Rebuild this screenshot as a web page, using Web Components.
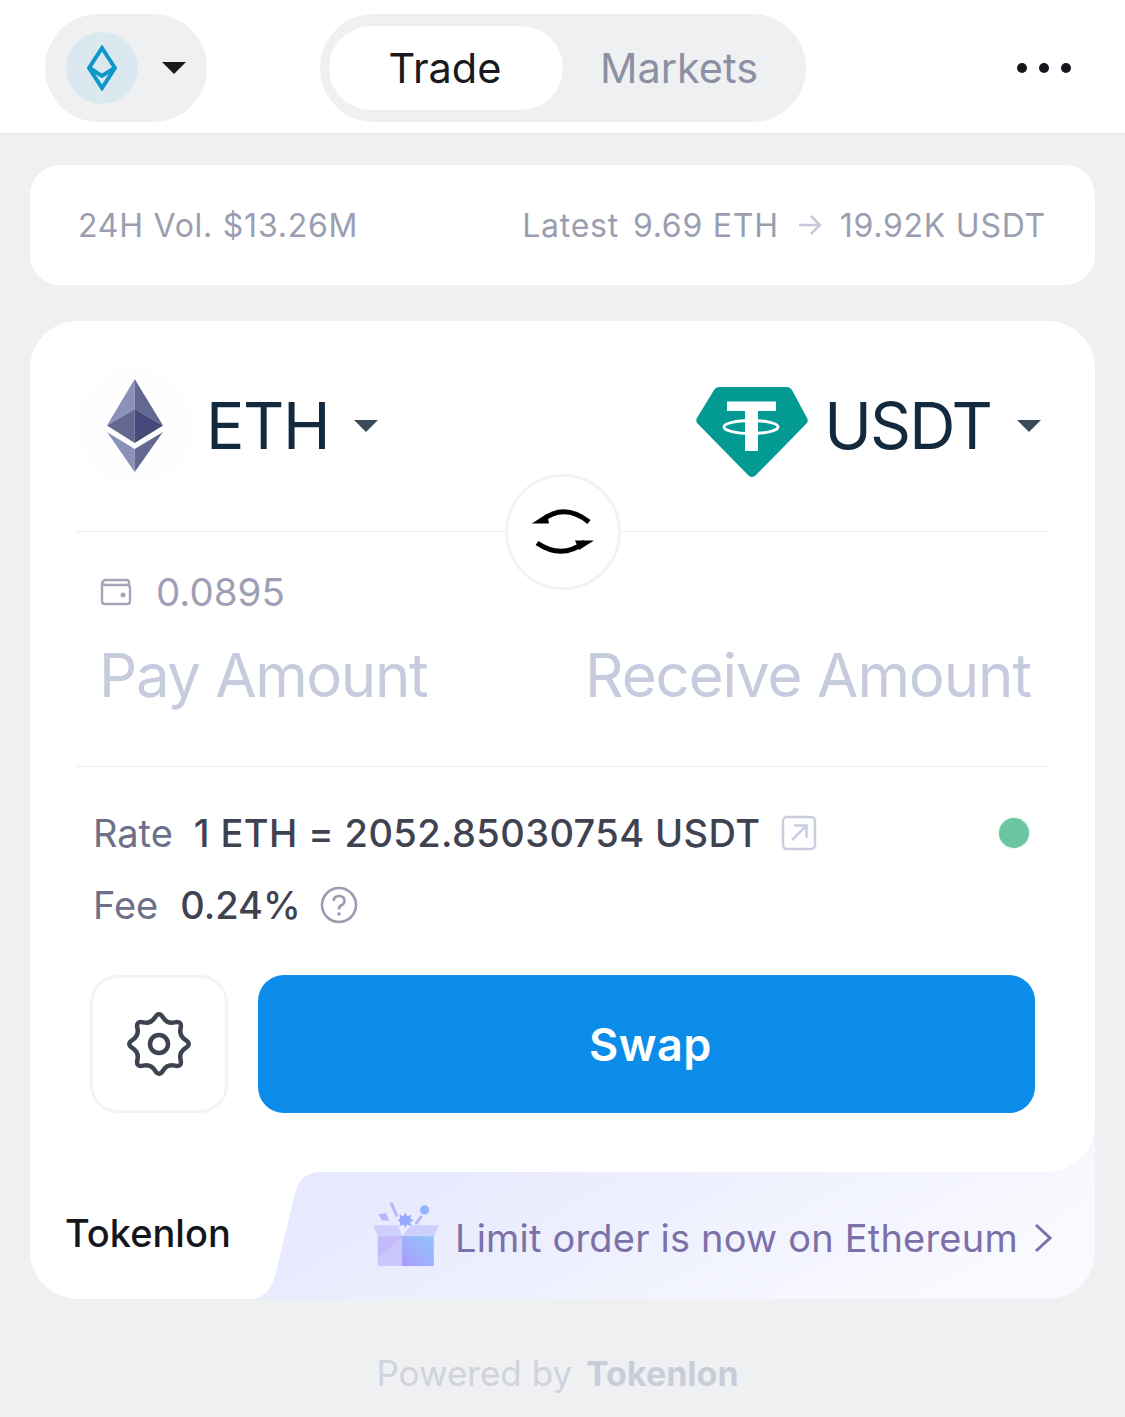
<!DOCTYPE html>
<html>
<head>
<meta charset="utf-8">
<style>
html,body{margin:0;padding:0;background:#eff0f2;font-family:Inter,"Liberation Sans",sans-serif}
</style>
</head>
<body>
<tl-app></tl-app>
<script>
class TlHeader extends HTMLElement{
    constructor(){
        super();
        this.attachShadow({mode:'open'})
        this.shadowRoot.innerHTML=`
            <style>
                :host{display:flex;align-items:center;height:130px;background:#fff;border-bottom:2px solid #eceef1;padding:3px 0 0 45px}
                #network{display:flex;align-items:center;box-sizing:border-box;width:162px;height:108px;border-radius:54px;background:#eff0f2;padding-left:21px}
                #coin{display:flex;align-items:center;justify-content:center;width:72px;height:72px;border-radius:50%;background:#dbe8ef}
                #caret{margin-left:24px}
                #tabs{display:flex;align-items:center;box-sizing:border-box;width:486px;height:108px;margin-left:113px;padding-left:9px;border-radius:54px;background:#eff0f2}
                .tab{display:flex;align-items:center;justify-content:center;box-sizing:border-box;width:234px;height:84px;padding-right:2px;border-radius:42px;font-size:41.5px;color:#8d90a5}
                .on{background:#fff;color:#181a1f}
                #dots{display:flex;gap:12px;margin-left:211px}
                #dots i{width:10px;height:10px;border-radius:50%;background:#16181d}
            </style>
            <div id="network">
                <div id="coin">
                    <svg width="30" height="46" viewBox="0 0 30 46"><path d="M15 3 L28 23 L15 43 L2 23 Z M2.500 23 L15 31 L27.500 23" fill="none" stroke="#0e97c9" stroke-width="4" stroke-linejoin="miter"/></svg>
                </div>
                <svg id="caret" width="24" height="12" viewBox="0 0 24 12"><path d="M0 0 H24 L12 12 Z" fill="#181a1c"/></svg>
            </div>
            <div id="tabs">
                <div class="tab on">Trade</div>
                <div class="tab">Markets</div>
            </div>
            <div id="dots"><i></i><i></i><i></i></div>
        `
    }
}
customElements.define('tl-header',TlHeader)

class TlStats extends HTMLElement{
    constructor(){
        super();
        this.attachShadow({mode:'open'})
        this.shadowRoot.innerHTML=`
            <style>
                :host{display:flex;align-items:center;justify-content:space-between;box-sizing:border-box;height:120px;margin:30px 30px 0;padding:0 49px 0 48px;border-radius:30px;background:#fff;font-size:32px;letter-spacing:.75px;color:#9b9eb1}
                #latest{display:flex;align-items:center}
                #num{margin-left:14px}
                svg{margin:0 18px 0 19px}
            </style>
            <div>24H Vol. $13.26M</div>
            <div id="latest">
                <span>Latest</span><span id="num">9.69 ETH</span>
                <svg width="24" height="22" viewBox="0 0 24 22"><path d="M1 11 H22 M13 2 L22 11 L13 20" fill="none" stroke="#c5c9da" stroke-width="2.500"/></svg>
                <span>19.92K USDT</span>
            </div>
        `
    }
}
customElements.define('tl-stats',TlStats)

class TlToken extends HTMLElement{
    constructor(){
        super();
        this.attachShadow({mode:'open'})
        this.shadowRoot.innerHTML=`
            <style>
                :host{display:flex;align-items:center;font-size:64px;line-height:1;letter-spacing:-1.4px;color:#132a3e}
                svg{display:block;margin-left:var(--caret-gap,25px)}
            </style>
            <slot></slot>
            <span><slot name="label"></slot></span>
            <svg width="24" height="12" viewBox="0 0 24 12"><path d="M0 0 H24 L12 12 Z" fill="#3a4a58"/></svg>
        `
    }
}
customElements.define('tl-token',TlToken)

class TlInfo extends HTMLElement{
    constructor(){
        super();
        this.attachShadow({mode:'open'})
        this.shadowRoot.innerHTML=`
            <style>
                :host{display:flex;align-items:center;height:72px;padding-left:18px;font-size:38px;font-weight:500;color:#3f4250}
                #k{color:#6d7088;font-weight:400;margin-right:var(--key-gap,21px)}
            </style>
            <span id="k"><slot name="key"></slot></span>
            <slot></slot>
        `
    }
}
customElements.define('tl-info',TlInfo)

class TlCard extends HTMLElement{
    constructor(){
        super();
        this.attachShadow({mode:'open'})
        this.shadowRoot.innerHTML=`
            <style>
                :host{display:block;margin:36px 30px 0;border-radius:48px;overflow:hidden;background:#fff}
                #main{position:relative;z-index:1;box-sizing:border-box;height:851px;padding:0 45px;background:#fff;border-bottom-right-radius:48px}
                #tokens{display:flex;align-items:center;justify-content:space-between;box-sizing:border-box;height:211px;padding:0 9px 0 0;border-bottom:1px solid #ecedf5}
                #eth-wrap{display:flex;align-items:center;justify-content:center;width:119px;height:120px;margin-right:12px;border-radius:50%;background:#fefefe}
                #usdt-icon{margin:11px 15px 0 0}
                #usdt{--caret-gap:26px;letter-spacing:-1.9px}
                #flip{position:absolute;left:475px;top:153px;box-sizing:border-box;display:flex;align-items:center;justify-content:center;width:116px;height:116px;border-radius:50%;background:#fff;border:3px solid #f1f2f4}
                #bal{display:flex;align-items:center;height:120px;padding-left:25px;font-size:38.5px;color:#9da0b4;gap:24px}
                #amounts{display:flex;justify-content:space-between;box-sizing:border-box;height:115px;padding:0 19px 0 24px;font-size:60px;line-height:46px;letter-spacing:-1.1px;color:#c7cbde;border-bottom:1px solid #ecedf5}
                #pay{letter-spacing:-1.4px}
                #infos{padding-top:30px}
                #rate{letter-spacing:.4px}
                #fee{--key-gap:22px}
                #ext{margin-left:21px}
                #help{margin-left:19px}
                #dot{width:30px;height:30px;margin-left:auto;margin-right:21px;border-radius:50%;background:#6cc5a1;box-shadow:0 0 3px #bdecd6}
                #actions{display:flex;gap:30px;padding:34px 15px 0;}
                #gear{display:flex;align-items:center;justify-content:center;box-sizing:border-box;width:138px;height:138px;border-radius:28px;border:3px solid #f2f3f5;background:#fff}
                #swap{display:flex;align-items:center;justify-content:center;box-sizing:border-box;width:777px;height:138px;border-radius:26px;background:#0a8ce8;color:#fff;font-size:45px;font-weight:600;letter-spacing:.5px;padding-left:8px}
                #foot{position:relative;display:flex;align-items:center;height:175px;margin-top:-48px;padding-top:48px;box-sizing:border-box}
                #shape{position:absolute;left:0;bottom:0}
                #brand{position:relative;margin-left:35px;width:308px;font-size:38px;font-weight:500;color:#14161b;margin-top:-6px}
                #promo{position:relative;display:flex;align-items:center;font-size:38px;letter-spacing:.2px;color:#7c70a8;margin-top:4px}
                #gift{margin:-8px 16px 0 0}
                #chev{margin-left:16px}
            </style>
            <div id="main">
                <div id="tokens">
                    <tl-token>
                        <div id="eth-wrap">
                            <svg width="58" height="94" viewBox="0 0 58 94">
                                <path d="M28.700 0 L1 46.500 L28.700 30 Z" fill="#8a92b8"/>
                                <path d="M28.700 0 L57 46.500 L28.700 30 Z" fill="#62688f"/>
                                <path d="M1 46.500 L28.700 30 V64 Z" fill="#62688f"/>
                                <path d="M57 46.500 L28.700 30 V64 Z" fill="#444a79"/>
                                <path d="M1 53 L28.700 70 V93 Z" fill="#8a92b8"/>
                                <path d="M57 53 L28.700 70 V93 Z" fill="#62688f"/>
                            </svg>
                        </div>
                        <span slot="label">ETH</span>
                    </tl-token>
                    <tl-token id="usdt">
                        <svg id="usdt-icon" width="114" height="92" viewBox="0 0 114 92">
                            <path d="M24 1 H92 Q95 1 97 4 L112 32 Q114 35 111 38 L61 89 Q57 93 53 89 L3 38 Q0 35 2 32 L19 4 Q21 1 24 1 Z" fill="#029a93"/>
                            <path d="M32 15.500 H81 V25 H63 V65 H50 V25 H32 Z" fill="#fff"/>
                            <ellipse cx="56" cy="41" rx="27" ry="6.500" fill="none" stroke="#fff" stroke-width="3"/>
                        </svg>
                        <span slot="label">USDT</span>
                    </tl-token>
                </div>
                <div id="flip">
                    <svg width="64" height="48" viewBox="0 0 64 48">
                        <path d="M58 14 Q33 -6 10 13" fill="none" stroke="#000" stroke-width="5"/>
                        <path d="M0.700 15.500 L18 15.500 L16 6 Z" fill="#000"/>
                        <path d="M6 35 Q31 52 54 34" fill="none" stroke="#000" stroke-width="5"/>
                        <path d="M63 32.500 L44 32.500 L48 42 Z" fill="#000"/>
                    </svg>
                </div>
                <div id="bal">
                    <svg width="32" height="28" viewBox="0 0 32 28"><path d="M29 7 V4 Q29 2 27 2 H6 Q2 2 2 6 V23 Q2 26 5 26 H27 Q30 26 30 23 V10 Q30 7 27 7 H6 Q3 7 2.500 5" fill="none" stroke="#a3a6b9" stroke-width="2.400"/><circle cx="23" cy="17" r="2.500" fill="#a3a6b9"/></svg>
                    <span>0.0895</span>
                </div>
                <div id="amounts">
                    <span id="pay">Pay Amount</span>
                    <span>Receive Amount</span>
                </div>
                <div id="infos">
                    <tl-info>
                        <span slot="key">Rate</span>
                        <span id="rate">1 ETH = 2052.85030754 USDT</span>
                        <svg id="ext" width="36" height="36" viewBox="0 0 36 36"><rect x="2" y="2" width="32" height="32" rx="4" fill="none" stroke="#c9cde0" stroke-width="2.500"/><path d="M11 25 L25 11 M13 10.500 H25.500 V23" fill="none" stroke="#c9cde0" stroke-width="2.500"/></svg>
                        <div id="dot"></div>
                    </tl-info>
                    <tl-info id="fee">
                        <span slot="key">Fee</span>
                        <span>0.24%</span>
                        <svg id="help" width="38" height="38" viewBox="0 0 38 38"><circle cx="19" cy="19" r="17" fill="none" stroke="#9a9db1" stroke-width="2.600"/><path d="M13.500 15 Q14 10 19 10 Q24.500 10 24.500 15 Q24.500 18 21 19.500 Q19 20.500 19 23.500" fill="none" stroke="#9a9db1" stroke-width="2.600"/><circle cx="19" cy="28" r="1.800" fill="#9a9db1"/></svg>
                    </tl-info>
                </div>
                <div id="actions">
                    <div id="gear">
                        <svg width="70" height="70" viewBox="-35 -35 70 70">
                            <path d="M-4.110 -26.430 Q0 -33 4.110 -26.430 Q8.230 -19.860 15.780 -21.600 Q23.330 -23.330 21.600 -15.780 Q19.860 -8.230 26.430 -4.110 Q33 0 26.430 4.110 Q19.860 8.230 21.600 15.780 Q23.330 23.330 15.780 21.600 Q8.230 19.860 4.110 26.430 Q0 33 -4.110 26.430 Q-8.230 19.860 -15.780 21.600 Q-23.330 23.330 -21.600 15.780 Q-19.860 8.230 -26.430 4.110 Q-33 0 -26.430 -4.110 Q-19.860 -8.230 -21.600 -15.780 Q-23.330 -23.330 -15.780 -21.600 Q-8.230 -19.860 -4.110 -26.430 Z" fill="none" stroke="#3e4350" stroke-width="4.500"/>
                            <circle r="9" fill="none" stroke="#3e4350" stroke-width="4.500"/>
                        </svg>
                    </div>
                    <div id="swap">Swap</div>
                </div>
            </div>
            <div id="foot">
                <svg id="shape" width="1065" height="175" viewBox="0 0 1065 175">
                    <defs><linearGradient id="bg" x1="0.100" y1="0.500" x2="0.900" y2="0.800"><stop offset="0" stop-color="#e7e9fe"/><stop offset="1" stop-color="#f9fafe"/></linearGradient></defs>
                    <path d="M290 48 H850 V0 H1065 V175 H225 Q240 170 245 152 L265 70 Q270 48 290 48 Z" fill="url(#bg)"/>
                </svg>
                <div id="brand">Tokenlon</div>
                <div id="promo">
                    <svg id="gift" width="66" height="64" viewBox="369 155 198 193">
                        <defs>
                            <linearGradient id="box" x1="0" y1="1" x2="1" y2="0"><stop offset="0" stop-color="#aa9cfa"/><stop offset="1" stop-color="#90c5fd"/></linearGradient>
                            <linearGradient id="star" x1="0" y1="0" x2="1" y2="1"><stop offset="0" stop-color="#9c9dfc"/><stop offset="1" stop-color="#8db5fd"/></linearGradient>
                        </defs>
                        <path d="M369 225 H445 L456 258 H383 Z" fill="#ced0fb"/>
                        <path d="M567 225 H484 L456 258 H552 Z" fill="#cdd0fc"/>
                        <path d="M383 258 H456 V348 H383 Z" fill="#c9c7fb"/>
                        <path d="M383 325 L456 258 H383 Z" fill="#c4bafa"/>
                        <rect x="456" y="258" width="96" height="90" fill="url(#box)"/>
                        <path d="M385 192 L408 188 L417 211 L396 211 Z" fill="#c0b4f9"/>
                        <path d="M424 160 L440 195" stroke="#c0b4f9" stroke-width="9" stroke-linecap="round"/>
                        <path d="M499 219 L513 200" stroke="#c0b4f9" stroke-width="9" stroke-linecap="round"/>
                        <circle cx="524" cy="179" r="14" fill="#93b4fd"/>
                        <path d="M466 187 L472 199 L484 193 L481 205 L491 210 L481 216 L484 228 L472 223 L466 233 L460 223 L448 228 L451 216 L443 210 L451 205 L448 193 L460 199 Z" fill="url(#star)"/>
                    </svg>
                    <span>Limit order is now on Ethereum</span>
                    <svg id="chev" width="18" height="30" viewBox="0 0 18 30"><path d="M2 2 L16 15 L2 28" fill="none" stroke="#7c70a8" stroke-width="3"/></svg>
                </div>
            </div>
        `
    }
}
customElements.define('tl-card',TlCard)

class TlFooter extends HTMLElement{
    constructor(){
        super();
        this.attachShadow({mode:'open'})
        this.shadowRoot.innerHTML=`
            <style>
                :host{display:flex;justify-content:center;align-items:center;gap:14px;box-sizing:border-box;height:118px;padding:30px 10px 0 0;font-size:35px;color:#d0d3de}
                b{font-size:34px;font-weight:700;color:#c9cdd9}
            </style>
            <span>Powered by</span><b>Tokenlon</b>
        `
    }
}
customElements.define('tl-footer',TlFooter)

class TlApp extends HTMLElement{
    constructor(){
        super();
        this.attachShadow({mode:'open'})
        this.shadowRoot.innerHTML=`
            <style>
                :host{display:block;width:1125px;height:1417px;overflow:hidden;background:#eff0f2;font-family:Inter,"Liberation Sans",sans-serif}
            </style>
            <tl-header></tl-header>
            <tl-stats></tl-stats>
            <tl-card></tl-card>
            <tl-footer></tl-footer>
        `
    }
}
customElements.define('tl-app',TlApp)
</script>
</body>
</html>
